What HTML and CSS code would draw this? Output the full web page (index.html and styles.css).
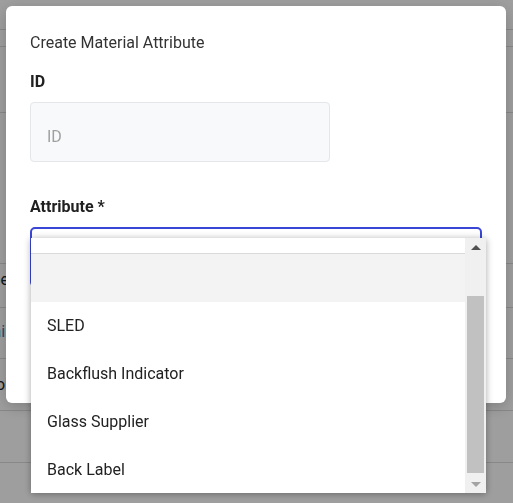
FILE: index.html
```html
<!DOCTYPE html>
<html>
<head>
<meta charset="utf-8">
<link rel="stylesheet" href="styles.css">
</head>
<body>
<div class="page">
  <div class="row r1"></div>
  <div class="row r2"></div>
  <div class="row r3"></div>
  <div class="row r4"></div>
  <div class="row r5"><span class="peek">Type</span></div>
  <div class="row r6"><span class="peek link">Detail</span></div>
  <div class="row r7"><span class="peek">Bool</span></div>
  <div class="row r8"></div>
</div>
<div class="backdrop"></div>
<div class="modal">
  <h2 class="title">Create Material Attribute</h2>
  <div class="field">
    <label class="label">ID</label>
    <div class="input">ID</div>
  </div>
  <div class="field">
    <label class="label">Attribute *</label>
    <div class="select"></div>
  </div>
</div>
<div class="dropdown">
  <div class="options">
    <div class="opt partial"></div>
    <div class="opt active"></div>
    <div class="opt">SLED</div>
    <div class="opt">Backflush Indicator</div>
    <div class="opt">Glass Supplier</div>
    <div class="opt">Back Label</div>
  </div>
  <div class="scrollbar">
    <div class="arrow up"></div>
    <div class="track"><div class="thumb"></div></div>
    <div class="arrow down"></div>
  </div>
</div>
</body>
</html>
```

FILE: styles.css
```css
* { box-sizing: border-box; }
html, body { margin: 0; padding: 0; }
body {
  width: 513px;
  height: 503px;
  overflow: hidden;
  background: #ffffff;
  font-family: Roboto, "Liberation Sans", sans-serif;
  color: #212529;
}
.page { display: flex; flex-direction: column; }
.row {
  border-bottom: 1px solid #dcdcdc;
  display: flex;
  align-items: center;
  font-size: 16px;
}
.r1 { height: 30px; }
.r2 { height: 17px; }
.r3 { height: 66px; }
.r4 { height: 151px; }
.r5 { height: 44px; padding-bottom: 12px; }
.r6 { height: 51px; padding-bottom: 4px; }
.r7 { height: 52px; }
.r8 { height: 52px; }
.peek {
  width: 9px;
  overflow: hidden;
  display: flex;
  justify-content: flex-end;
  white-space: nowrap;
}
.link { color: #2a7fb8; }
.backdrop {
  position: fixed;
  inset: 0;
  background: rgba(0, 0, 0, 0.38);
}
.modal {
  position: fixed;
  left: 6px;
  top: 6px;
  width: 500px;
  height: 397px;
  background: #fff;
  border-radius: 6px;
  padding: 25px 24px 0 24px;
  box-shadow: 0 4px 16px rgba(0,0,0,0.2);
}
.title {
  margin: 0;
  font-size: 16px;
  font-weight: 400;
  line-height: 24px;
  color: #333;
}
.field { display: flex; flex-direction: column; gap: 8px; }
.field:first-of-type { margin-top: 15px; }
.field + .field { margin-top: 33px; }
.label {
  font-size: 16px;
  font-weight: 700;
  line-height: 24px;
  color: #212121;
}
.input {
  width: 300px;
  height: 60px;
  background: #f8f9fa;
  border: 1px solid #e4e6e9;
  border-radius: 4px;
  padding: 8px 0 0 16px;
  display: flex;
  align-items: center;
  color: #a0a0a0;
  font-size: 16px;
}
.select {
  width: 452px;
  height: 60px;
  border: 2px solid #3a47d6;
  border-radius: 5px;
  background: #fff;
}
.dropdown {
  position: fixed;
  left: 31px;
  top: 238px;
  width: 455px;
  height: 255px;
  background: #fff;
  display: flex;
  overflow: hidden;
  box-shadow: 0 1px 7px rgba(0,0,0,0.35);
}
.options { flex: 1; display: flex; flex-direction: column; }
.opt {
  flex: none;
  height: 48px;
  padding: 0 0 2px 16px;
  display: flex;
  align-items: center;
  font-size: 16px;
  color: #222;
}
.opt.partial { height: 16px; padding: 0; border-bottom: 1px solid #dadada; }
.opt.active { background: #f3f3f3; }
.scrollbar {
  width: 21px;
  flex: none;
  background: #f0f0f0;
  display: flex;
  flex-direction: column;
}
.arrow { height: 17px; flex: none; display: flex; justify-content: center; align-items: center; }
.arrow.up::after {
  content: "";
  border-left: 5px solid transparent;
  border-right: 5px solid transparent;
  border-bottom: 5px solid #505050;
  margin-top: 2px;
}
.arrow.down::after {
  content: "";
  border-left: 5px solid transparent;
  border-right: 5px solid transparent;
  border-top: 5px solid #a3a3a3;
  margin-top: -1px;
}
.track { flex: 1; position: relative; }
.thumb {
  position: absolute;
  left: 2px;
  right: 2px;
  top: 41px;
  height: 177px;
  background: #c1c1c1;
}
```
